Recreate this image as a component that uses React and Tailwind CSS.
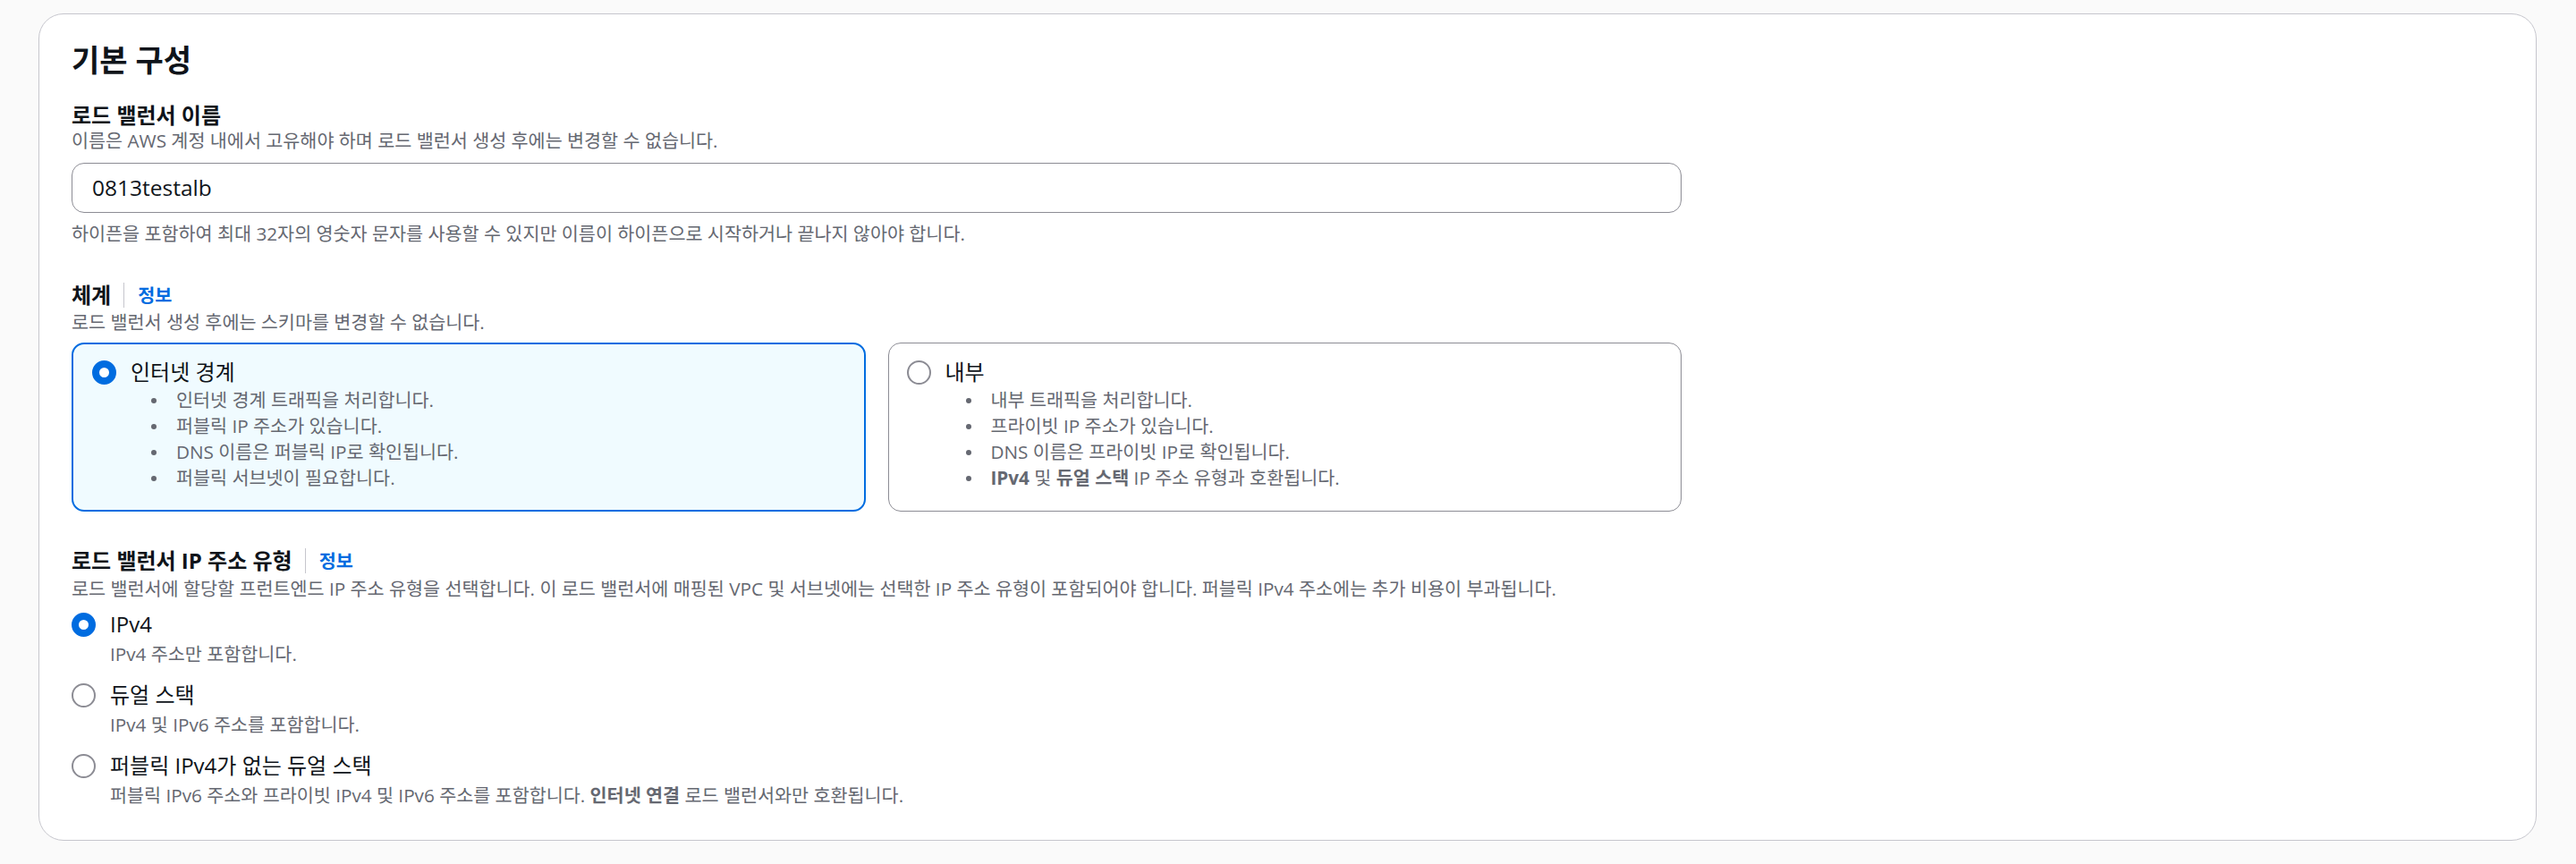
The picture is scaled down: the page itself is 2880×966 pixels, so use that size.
import React from "react";

function Radio({ checked }) {
    if (checked) {
        return <span className="block w-[27px] h-[27px] shrink-0 rounded-full border-[8px] border-[#006ce0] bg-white" />;
    }
    return <span className="block w-[27px] h-[27px] shrink-0 rounded-full border-2 border-[#8c8c94] bg-white" />;
}

function InfoLabel({ children }) {
    return (
        <div className="flex items-center h-[28px] text-[24px] leading-[28px] font-bold text-[#0f141a]">
            <span>{children}</span>
            <span className="ml-[14px] mr-[15px] w-px h-[28px] bg-[#c6c6cd]" />
            <span className="text-[20.7px] text-[#006ce0]">정보</span>
        </div>
    );
}

function Bullet({ children }) {
    return (
        <li className="flex items-center h-[29px]">
            <span className="ml-[23px] mr-[22px] w-[6px] h-[6px] rounded-full bg-[#656871] shrink-0" />
            <span>{children}</span>
        </li>
    );
}

function Tile({ checked, label, items }) {
    return (
        <div className={checked
            ? "rounded-[14px] border-[2.5px] border-[#006ce0] bg-[#f0fbff] pl-[21px] pt-[16px]"
            : "rounded-[14px] border-[1.5px] border-[#8c8c94] bg-white pl-[20px] pt-[17px]"}>
            <div className="flex items-center gap-[16px]">
                <Radio checked={checked} />
                <span className="text-[24px] leading-[30px] text-[#0f141a]">{label}</span>
            </div>
            <ul className="mt-[2px] pl-[43px] text-[20.7px] leading-[29px] text-[#656871]">
                {items.map((it, i) => <Bullet key={i}>{it}</Bullet>)}
            </ul>
        </div>
    );
}

function Option({ checked, label, desc, className }) {
    return (
        <div className={className}>
            <div className="flex items-center gap-[16px]">
                <Radio checked={checked} />
                <span className="text-[24px] leading-[30px] text-[#0f141a]">{label}</span>
            </div>
            <p className="mt-[6px] pl-[43px] text-[20.7px] leading-[24px] text-[#656871]">{desc}</p>
        </div>
    );
}

export default function App() {
    return (
        <div className="w-[2880px] h-[966px] bg-[#fafafa] pl-[43px] pr-[44px] pt-[15px] font-['Open_Sans','Noto_Sans_CJK_KR',sans-serif]">
            <div className="h-[925px] bg-white border border-[#c6c6cd] rounded-[28px] pl-[36px] pt-[31px]">
                <h2 className="text-[34px] leading-[40px] font-bold text-[#0f141a]">기본 구성</h2>

                <p className="mt-[28px] text-[24px] leading-[28px] font-bold text-[#0f141a]">로드 밸런서 이름</p>
                <p className="mt-[2px] text-[20.7px] leading-[24px] text-[#656871]">
                    이름은 AWS 계정 내에서 고유해야 하며 로드 밸런서 생성 후에는 변경할 수 없습니다.
                </p>
                <div className="mt-[13px] w-[1800px] h-[56px] rounded-[14px] border border-[#8c8c94] bg-white flex items-center pl-[22px]">
                    <span className="text-[24.5px] text-[#0f141a]">0813testalb</span>
                </div>
                <p className="mt-[11px] text-[20.7px] leading-[24px] text-[#656871]">
                    하이픈을 포함하여 최대 32자의 영숫자 문자를 사용할 수 있지만 이름이 하이픈으로 시작하거나 끝나지 않아야 합니다.
                </p>

                <div className="mt-[43px]">
                    <InfoLabel>체계</InfoLabel>
                </div>
                <p className="mt-[4px] text-[20.7px] leading-[24px] text-[#656871]">로드 밸런서 생성 후에는 스키마를 변경할 수 없습니다.</p>
                <div className="mt-[11px] w-[1800px] h-[189px] grid grid-cols-2 gap-[25px]">
                    <Tile
                        checked
                        label="인터넷 경계"
                        items={[
                            "인터넷 경계 트래픽을 처리합니다.",
                            "퍼블릭 IP 주소가 있습니다.",
                            "DNS 이름은 퍼블릭 IP로 확인됩니다.",
                            "퍼블릭 서브넷이 필요합니다.",
                        ]}
                    />
                    <Tile
                        label="내부"
                        items={[
                            "내부 트래픽을 처리합니다.",
                            "프라이빗 IP 주소가 있습니다.",
                            "DNS 이름은 프라이빗 IP로 확인됩니다.",
                            <><b className="font-bold">IPv4</b> 및 <b className="font-bold">듀얼 스택</b> IP 주소 유형과 호환됩니다.</>,
                        ]}
                    />
                </div>

                <div className="mt-[41px]">
                    <InfoLabel>로드 밸런서 IP 주소 유형</InfoLabel>
                </div>
                <p className="mt-[5px] text-[20.7px] leading-[24px] text-[#656871]">
                    로드 밸런서에 할당할 프런트엔드 IP 주소 유형을 선택합니다. 이 로드 밸런서에 매핑된 VPC 및 서브넷에는 선택한 IP 주소 유형이 포함되어야 합니다. 퍼블릭 IPv4 주소에는 추가 비용이 부과됩니다.
                </p>

                <Option
                    className="mt-[13px]"
                    checked
                    label="IPv4"
                    desc="IPv4 주소만 포함합니다."
                />
                <Option
                    className="mt-[19px]"
                    label="듀얼 스택"
                    desc="IPv4 및 IPv6 주소를 포함합니다."
                />
                <Option
                    className="mt-[19px]"
                    label="퍼블릭 IPv4가 없는 듀얼 스택"
                    desc={<>퍼블릭 IPv6 주소와 프라이빗 IPv4 및 IPv6 주소를 포함합니다. <b className="font-bold">인터넷 연결</b> 로드 밸런서와만 호환됩니다.</>}
                />
            </div>
        </div>
    );
}
